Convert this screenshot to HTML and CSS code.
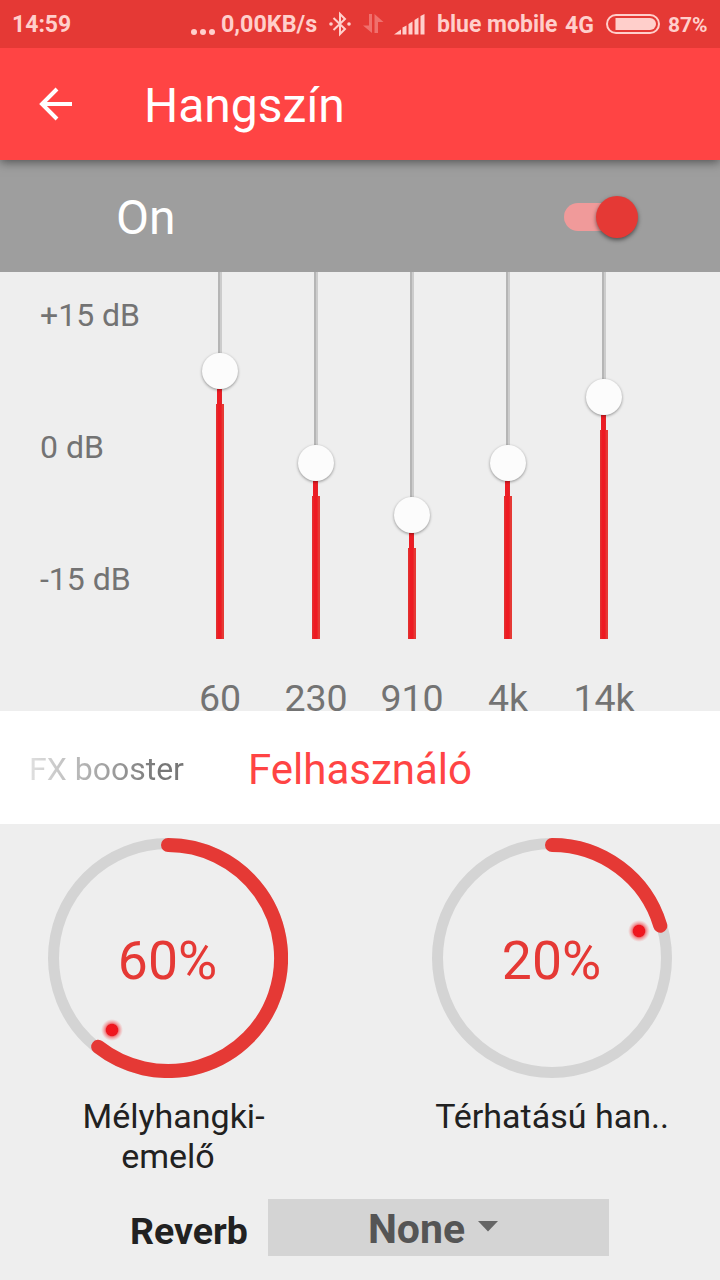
FILE: index.html
```html
<!DOCTYPE html>
<html lang="hu">
<head>
  <meta charset="UTF-8">
  <meta name="viewport" content="width=device-width, initial-scale=1.0">
  <title>Hangszín</title>
  <link rel="stylesheet" href="styles.css">
</head>
<body>
  <div class="status-bar">
    <span class="clock">14:59</span>
    <span class="dots"><i></i><i></i><i></i></span>
    <span class="speed">0,00KB/s</span>
    <svg class="bluetooth" width="24" height="26" viewBox="0 0 24 26">
      <path d="M5.500 7L17 18L12 23V3L17 8L5.500 19" fill="none" stroke="#ffcfcb" stroke-width="2"/>
      <circle cx="3" cy="13" r="1.800" fill="#ffcfcb"/>
      <circle cx="21" cy="13" r="1.800" fill="#ffcfcb"/>
    </svg>
    <svg class="transfer" width="22" height="22" viewBox="0 0 22 22">
      <path d="M7 1h3v19L1 12.500h6zM12.500 20V1l9 8h-5.500v11z" fill="#f0706d"/>
    </svg>
    <svg class="signal" width="32" height="22" viewBox="0 0 32 22">
      <path d="M0 21.500l7-5v5zM8.500 14.500l4-2v9h-4zM14.500 11l4-2.500v13h-4zM20.500 7l4-2.500v17h-4zM26.500 3l4-2v20.500h-4z" fill="#ffcfcb"/>
    </svg>
    <span class="carrier">blue mobile</span>
    <span class="network">4G</span>
    <svg class="battery" width="54" height="20" viewBox="0 0 54 20">
      <rect x="1" y="1" width="52" height="18" rx="9" fill="none" stroke="#ffcfcb" stroke-width="2"/>
      <path d="M9.500 4H44a6 6 0 0 1 0 12H9.500z" fill="#ffcfcb"/>
    </svg>
    <span class="percent">87%</span>
  </div>

  <div class="app-bar">
    <svg class="back" width="34" height="34" viewBox="0 0 34 34">
      <path d="M33 17H4M18 2L3 17L18 32" fill="none" stroke="#fff" stroke-width="4"/>
    </svg>
    <h1>Hangszín</h1>
  </div>

  <div class="power-row">
    <span>On</span>
    <div class="switch"><div class="switch-thumb"></div></div>
  </div>

  <div class="equalizer">
    <div class="db-labels">
      <span>+15 dB</span>
      <span>0 dB</span>
      <span>-15 dB</span>
    </div>
    <div class="bands">
      <div class="band">
        <div class="slider"><div class="track" style="height: 81px"></div><div class="thumb"></div><div class="stem"></div><div class="fill"></div></div>
        <span>60</span>
      </div>
      <div class="band">
        <div class="slider"><div class="track" style="height: 173px"></div><div class="thumb"></div><div class="stem"></div><div class="fill"></div></div>
        <span>230</span>
      </div>
      <div class="band">
        <div class="slider"><div class="track" style="height: 225px"></div><div class="thumb"></div><div class="stem"></div><div class="fill"></div></div>
        <span>910</span>
      </div>
      <div class="band">
        <div class="slider"><div class="track" style="height: 173px"></div><div class="thumb"></div><div class="stem"></div><div class="fill"></div></div>
        <span>4k</span>
      </div>
      <div class="band">
        <div class="slider"><div class="track" style="height: 107px"></div><div class="thumb"></div><div class="stem"></div><div class="fill"></div></div>
        <span>14k</span>
      </div>
    </div>
  </div>

  <div class="presets">
    <span class="preset-prev">FX booster</span>
    <span class="preset-active">Felhasználó</span>
  </div>

  <div class="knobs">
    <div class="knob">
      <svg width="240" height="240" viewBox="0 0 240 240">
        <defs>
          <radialGradient id="glow">
            <stop offset="0" stop-color="#f5141c"/>
            <stop offset="0.52" stop-color="#ec1820"/>
            <stop offset="0.62" stop-color="#f04a50" stop-opacity="0.65"/>
            <stop offset="1" stop-color="#f58080" stop-opacity="0"/>
          </radialGradient>
        </defs>
        <circle cx="120" cy="120" r="114.500" class="ring"/>
        <path d="M120 7A113 113 0 1 1 50.200 208.800" class="arc"/>
        <circle cx="64" cy="192" r="11" fill="url(#glow)"/>
        <text x="119.500" y="140.500">60%</text>
      </svg>
      <div class="knob-label"><span class="first-line">Mélyhangki-</span><br>emelő</div>
    </div>
    <div class="knob">
      <svg width="240" height="240" viewBox="0 0 240 240">
        <circle cx="120" cy="120" r="114.500" class="ring"/>
        <path d="M120 7A113 113 0 0 1 228.300 87.700" class="arc"/>
        <circle cx="207" cy="93" r="11" fill="url(#glow)"/>
        <text x="119.500" y="140.500">20%</text>
      </svg>
      <div class="knob-label">Térhatású han..</div>
    </div>
  </div>

  <div class="reverb">
    <span class="reverb-label">Reverb</span>
    <div class="dropdown">
      <span>None</span>
      <svg width="20" height="11" viewBox="0 0 20 11"><path d="M0 0h20L10 10.500z" fill="#666"/></svg>
    </div>
  </div>
</body>
</html>
```
FILE: styles.css
```css
* {
  box-sizing: border-box;
}

body {
  margin: 0;
  width: 720px;
  height: 1280px;
  overflow: hidden;
  display: flex;
  flex-direction: column;
  font-family: Roboto, "Noto Sans", sans-serif;
  background-color: #eeeeee;
}

svg {
  display: block;
  flex: none;
}

/* status bar */
.status-bar {
  flex: none;
  display: flex;
  align-items: center;
  height: 48px;
  padding-left: 12px;
  background-color: #e53935;
  color: #ffcfcb;
  font-size: 23px;
  font-weight: bold;
  white-space: nowrap;
  z-index: 2;
}

.status-bar span {
  flex: none;
}

.clock {
  width: 179px;
}

.status-bar .dots {
  display: flex;
  gap: 3px;
  width: 30px;
  padding-top: 15px;
}

.dots i {
  width: 6px;
  height: 6px;
  border-radius: 50%;
  background-color: #ffcfcb;
}

.speed {
  width: 107px;
  font-size: 23.3px;
}

.transfer {
  margin-left: 10px;
}

.signal {
  margin-left: 10px;
}

.carrier {
  width: 128px;
  margin-left: 11px;
}

.network {
  width: 41px;
  padding-top: 2px;
}

.percent {
  margin-left: 8px;
  padding-top: 1px;
  font-size: 21px;
}

/* title */
.app-bar {
  flex: none;
  display: flex;
  align-items: center;
  height: 112px;
  padding-left: 39px;
  background-color: #ff4444;
  box-shadow: 0 2px 10px rgba(0, 0, 0, 0.5);
  z-index: 1;
}

h1 {
  margin: 3px 0 0 71px;
  font-size: 48px;
  font-weight: normal;
  color: #fff;
}

.power-row {
  flex: none;
  display: flex;
  justify-content: space-between;
  align-items: center;
  height: 112px;
  padding: 2px 83px 0 116px;
  background-color: #9e9e9e;
  font-size: 48px;
  color: #fff;
}

.switch {
  display: flex;
  align-items: center;
  justify-content: flex-end;
  width: 73px;
  height: 28px;
  border-radius: 14px;
  background-color: #f09a9a;
}

.switch-thumb {
  flex: none;
  width: 42px;
  height: 42px;
  margin-right: -1px;
  border-radius: 50%;
  background-color: #e53935;
  box-shadow: 0 2px 4px rgba(0, 0, 0, 0.5);
}

/* equalizer */
.equalizer {
  flex: none;
  display: flex;
  height: 439px;
  overflow: hidden;
  color: #737373;
}

.db-labels {
  display: flex;
  flex-direction: column;
  gap: 96px;
  width: 172px;
  padding: 25px 0 0 40px;
  font-size: 32px;
  line-height: 36px;
}

.bands {
  display: flex;
}

.band {
  width: 96px;
  text-align: center;
  font-size: 37.5px;
  line-height: 44px;
}

.slider {
  display: flex;
  flex-direction: column;
  align-items: center;
  height: 367px;
  margin-bottom: 37px;
}

.track {
  flex: none;
  width: 4px;
  background: linear-gradient(to right, #b5b5b5 50%, #cccccc 50%);
}

.thumb {
  flex: none;
  width: 36px;
  height: 36px;
  border-radius: 50%;
  background-color: #fcfcfc;
  box-shadow: 0 1px 3px rgba(0, 0, 0, 0.4);
  z-index: 1;
}

.stem {
  flex: none;
  width: 5px;
  height: 15px;
  margin-right: 1px;
  background: linear-gradient(to right, #ec1c24 80%, #d32f2f);
}

.fill {
  flex: 1;
  width: 8px;
  background: linear-gradient(to right, #e2302f 12%, #ee1a22 25%, #ee1a22 65%, #e53935 75%);
}

/* presets */
.presets {
  flex: none;
  display: flex;
  align-items: center;
  height: 113px;
  padding: 4px 0 0 29px;
  background-color: #fff;
}

.preset-prev {
  width: 219px;
  margin-top: -2px;
  font-size: 32px;
  background: linear-gradient(to right, #e0e0e0, #777777 130px);
  -webkit-background-clip: text;
  -webkit-text-fill-color: transparent;
}

.preset-active {
  font-size: 42px;
  color: #ff4444;
}

/* knobs */
.knobs {
  flex: none;
  display: flex;
  justify-content: space-between;
  height: 375px;
  padding: 14px 48px 0;
}

.knob {
  width: 240px;
}

.ring {
  fill: none;
  stroke: #d4d4d4;
  stroke-width: 11;
}

.arc {
  fill: none;
  stroke: #e53935;
  stroke-width: 14;
  stroke-linecap: round;
}

.knob text {
  fill: #e53935;
  font-size: 53.5px;
  text-anchor: middle;
}

.knob-label {
  padding-top: 18px;
  text-align: center;
  font-size: 34px;
  line-height: 40px;
  color: #212121;
  white-space: nowrap;
}

.first-line {
  padding-left: 11px;
}

.reverb {
  flex: none;
  display: flex;
  height: 57px;
  padding-left: 130px;
  font-weight: bold;
}

.reverb-label {
  width: 138px;
  font-size: 37.5px;
  line-height: 65px;
  color: #212121;
}

.dropdown {
  display: flex;
  justify-content: center;
  gap: 13px;
  width: 341px;
  height: 57px;
  padding-right: 11px;
  background-color: #d4d4d4;
  font-size: 41px;
  line-height: 61px;
  color: #555;
}

.dropdown svg {
  margin-top: 22px;
}
```
